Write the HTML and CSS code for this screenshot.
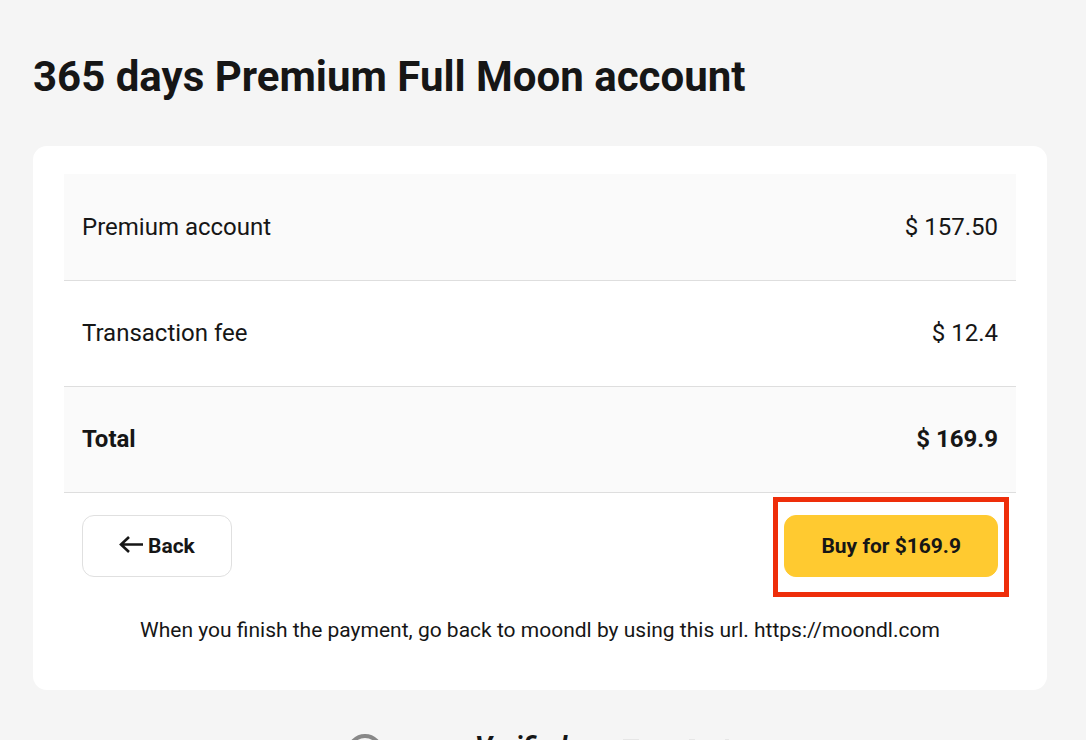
FILE: index.html
```html
<!DOCTYPE html>
<html lang="en">
<head>
    <meta charset="UTF-8">
    <meta name="viewport" content="width=device-width, initial-scale=1.0">
    <title>365 days Premium Full Moon account</title>
    <link rel="stylesheet" href="styles.css">
</head>
<body>
    <main class="checkout">
        <h1>365 days Premium Full Moon account</h1>

        <div class="card">
            <table class="summary">
                <tbody>
                    <tr>
                        <th scope="row">Premium account</th>
                        <td>$ 157.50</td>
                    </tr>
                    <tr>
                        <th scope="row">Transaction fee</th>
                        <td>$ 12.4</td>
                    </tr>
                    <tr class="total">
                        <th scope="row">Total</th>
                        <td>$ 169.9</td>
                    </tr>
                </tbody>
            </table>

            <div class="actions">
                <button type="button" class="btn back-btn">
                    <svg class="arrow" viewBox="0 0 24 20" aria-hidden="true">
                        <path d="M24 8.5H2M10 1L2 8.5L10 16"/>
                    </svg>
                    Back
                </button>
                <div class="buy">
                    <button type="button" class="btn buy-btn">Buy for $169.9</button>
                    <span class="highlight"></span>
                </div>
            </div>

            <p class="note">When you finish the payment, go back to moondl by using this url. https://moondl.com</p>
        </div>
    </main>

    <footer class="seal">
        <svg class="seal-icon" viewBox="0 0 36 36" aria-hidden="true">
            <circle cx="18" cy="18" r="16"/>
        </svg>
        <span class="seal-title">Verified</span>
        <svg class="seal-mark" viewBox="0 0 112 16" aria-hidden="true">
            <path d="M2 5.5H18M68 5.5H74M104 5.5H108"/>
        </svg>
    </footer>
</body>
</html>
```
FILE: styles.css
```css
* {
    margin: 0;
    padding: 0;
    box-sizing: border-box;
}

body {
    background-color: #f5f5f5;
    color: #161616;
    font-family: Roboto, sans-serif;
    height: 100vh;
    overflow: hidden;
}

.checkout {
    padding: 49px 39px 0 33px;
}

h1 {
    font-size: 42px;
    line-height: 56px;
    font-weight: 700;
    margin-bottom: 41px;
}

.card {
    background-color: white;
    border-radius: 14px;
    padding: 28px 31px 43px;
}

.summary {
    width: 100%;
    border-collapse: collapse;
    font-size: 24px;
    line-height: 32px;
}

.summary tr {
    border-bottom: 1px solid #dedede;
}

.summary tr:nth-child(odd) {
    background-color: #fafafa;
}

.summary th,
.summary td {
    height: 106px;
    padding: 0 18px;
    font-weight: 400;
    text-align: left;
}

.summary td {
    text-align: right;
}

.summary .total th,
.summary .total td {
    font-weight: 700;
}

.actions {
    display: flex;
    justify-content: space-between;
    padding: 22px 18px 36px;
}

.btn {
    display: flex;
    align-items: center;
    height: 62px;
    padding: 0 36px;
    border: 1px solid #e0e0e0;
    border-radius: 12px;
    background-color: white;
    color: #161616;
    font-family: inherit;
    font-size: 21px;
    font-weight: 700;
    cursor: pointer;
}

.back-btn {
    gap: 5px;
}

.arrow {
    width: 24px;
    height: 20px;
    fill: none;
    stroke: #161616;
    stroke-width: 2.6;
}

.buy {
    position: relative;
}

.buy-btn {
    border-color: #ffca30;
    background-color: #ffca30;
}

/* red frame around the buy button */
.highlight {
    position: absolute;
    top: -18px;
    right: -11px;
    bottom: -20px;
    left: -11px;
    border: 5px solid #ee2e0a;
    pointer-events: none;
}

.note {
    font-size: 21px;
    line-height: 34px;
    text-align: center;
}

.seal {
    display: flex;
    justify-content: center;
    padding: 44px 6px 0 0;
}

.seal-icon {
    width: 36px;
    height: 36px;
    margin-right: 92px;
    fill: none;
    stroke: #888;
    stroke-width: 4;
}

.seal-title {
    margin-right: 54px;
    font-size: 27px;
    line-height: 26px;
    font-style: italic;
    font-weight: 700;
}

.seal-mark {
    width: 112px;
    height: 16px;
    fill: none;
    stroke: #e6e6e6;
    stroke-width: 1;
}
```
